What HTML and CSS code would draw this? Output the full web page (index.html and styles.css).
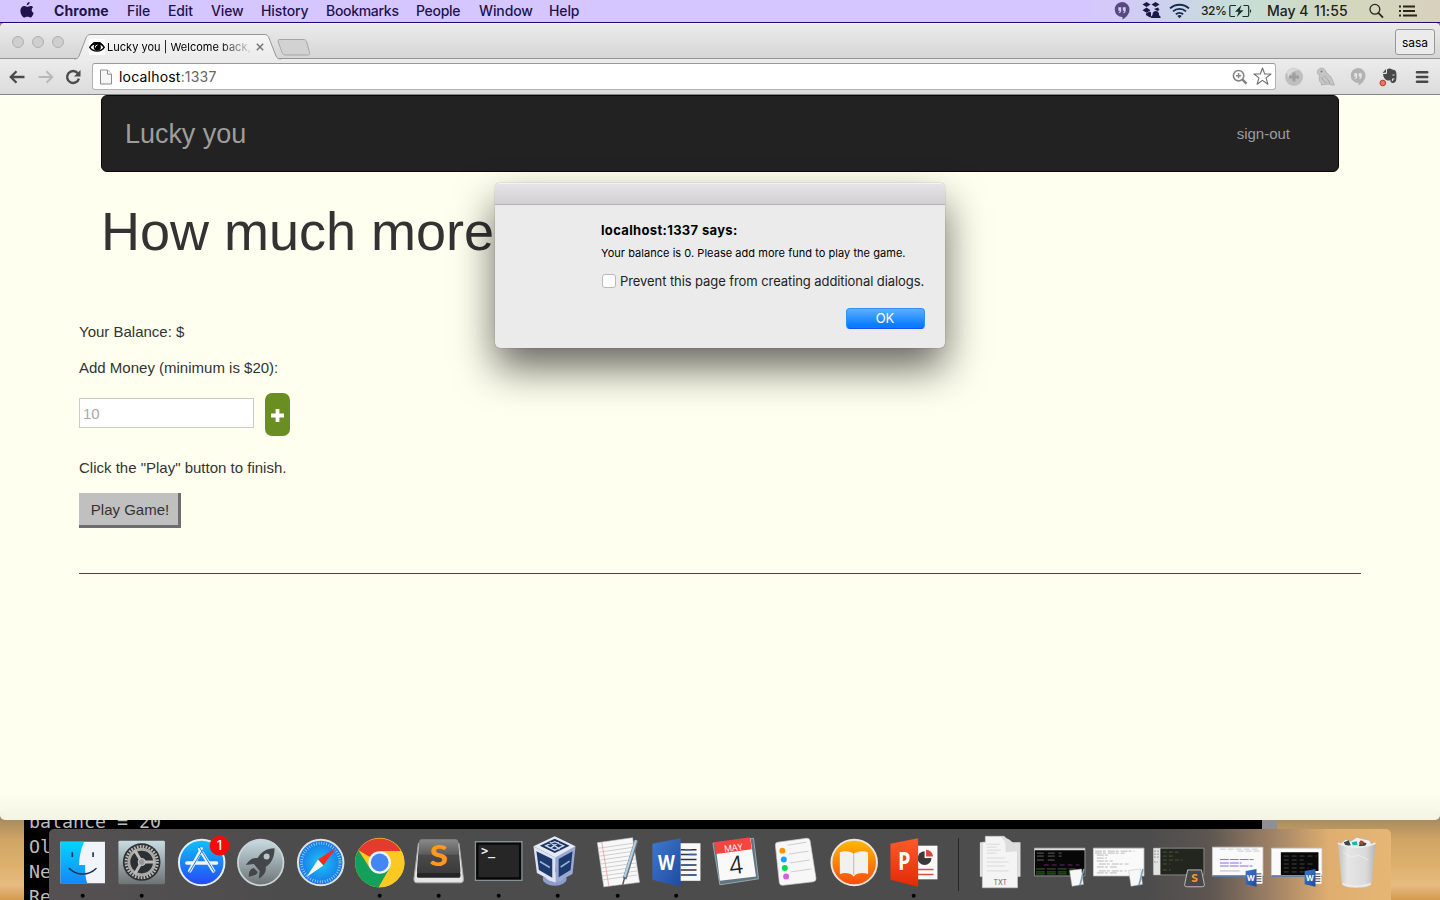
FILE: index.html
```html
<!DOCTYPE html>
<html lang="en">
<head>
<meta charset="utf-8">
<title>Lucky you | Welcome back</title>
<link rel="stylesheet" href="styles.css">
</head>
<body>
<svg class="defs" width="0" height="0" aria-hidden="true">
  <defs>
    <linearGradient id="gBlue" x1="0" y1="0" x2="0" y2="1"><stop offset="0" stop-color="#0fc1fb"/><stop offset="1" stop-color="#2747f5"/></linearGradient>
    <radialGradient id="gSafari"><stop offset="0" stop-color="#19c8f5"/><stop offset="1" stop-color="#1a72e8"/></radialGradient>
    <linearGradient id="gFinder" x1="0" y1="0" x2="0" y2="1"><stop offset="0" stop-color="#00d5ff"/><stop offset="1" stop-color="#1787f8"/></linearGradient>
    <linearGradient id="gSteel" x1="0" y1="0" x2="0" y2="1"><stop offset="0" stop-color="#c7dce3"/><stop offset="1" stop-color="#6e7375"/></linearGradient>
    <linearGradient id="gWord" x1="0" y1="0" x2="1" y2="1"><stop offset="0" stop-color="#3f78d0"/><stop offset="1" stop-color="#1e4c9f"/></linearGradient>
    <linearGradient id="gPower" x1="0" y1="0" x2="0" y2="1"><stop offset="0" stop-color="#ff5a28"/><stop offset="1" stop-color="#e02a08"/></linearGradient>
    <linearGradient id="gBooks" x1="0" y1="0" x2="0" y2="1"><stop offset="0" stop-color="#ffb900"/><stop offset="1" stop-color="#fb4a0c"/></linearGradient>
    <linearGradient id="gKey" x1="0" y1="0" x2="0" y2="1"><stop offset="0" stop-color="#8a8a8a"/><stop offset=".45" stop-color="#5c5c5c"/><stop offset=".46" stop-color="#4a4a4a"/><stop offset="1" stop-color="#3b3b3b"/></linearGradient>
    <linearGradient id="gBin" x1="0" y1="0" x2="1" y2="0"><stop offset="0" stop-color="#bfbfbf"/><stop offset=".25" stop-color="#e6e6e6"/><stop offset=".75" stop-color="#dadada"/><stop offset="1" stop-color="#b5b5b5"/></linearGradient>
    <linearGradient id="gTab" x1="0" y1="0" x2="0" y2="1"><stop offset="0" stop-color="#f6f6f6"/><stop offset="1" stop-color="#ebebeb"/></linearGradient>
    <symbol id="bubble" viewBox="0 0 16 18"><path fill="currentColor" fill-rule="evenodd" d="M8 0a7.5 7.5 0 0 1 7.5 7.5C15.500 12 12 15.500 8.500 17.500V15A7.500 7.500 0 1 1 8 0ZM4.300 5.200v3.600h1.500c0 .9-.4 1.400-1.100 1.600v.9c1.500-.2 2.500-1.200 2.500-2.800V5.200Zm4.500 0v3.600h1.500c0 .9-.4 1.400-1.100 1.600v.9c1.500-.2 2.500-1.200 2.500-2.800V5.200Z"/></symbol>
    <symbol id="miniWord" viewBox="0 0 20 20"><path fill="#fff" d="M9 3h9v13H9z"/><path stroke="#444" d="M11 6h6M11 8.500h6M11 11h6M11 13.500h6"/><path fill="url(#gWord)" d="M1 3l11-2v18L1 16.500z"/><text x="2.400" y="13" class="glyph-mini">W</text></symbol>
    <symbol id="miniEdit" viewBox="0 0 20 20"><path fill="#f7f7f7" stroke="#bbb" stroke-width=".5" d="M3 2.500l12-1.500 2 15.500-11.500 2z"/><path stroke="#7da0b6" stroke-width="1.600" d="M17.500 1l-4 16.500"/></symbol>
  </defs>
</svg>

<header class="menubar">
  <nav class="menus">
    <svg class="apple" width="14" height="16" viewBox="0 0 14 16"><path fill="#20124c" d="M9.700 0c.1 1.700-1.400 3.300-3 3.300C6.500 1.700 8.100.2 9.700 0ZM13.200 5.300c-2.200 1.400-1.900 4.600.5 5.600-.6 1.800-2 4.600-3.400 4.600-1.100 0-1.500-.7-2.900-.7s-1.800.7-2.800.7C2.600 15.500.4 12 .4 8.700.4 5.600 2.300 4 4.200 4c1.300 0 2.300.8 3.100.8.700 0 1.900-.9 3.400-.9 1 0 1.900.5 2.500 1.400Z"/></svg>
    <span class="app-name">Chrome</span><span>File</span><span>Edit</span><span>View</span><span>History</span><span class="tight">Bookmarks</span><span class="tight">People</span><span>Window</span><span>Help</span>
  </nav>
  <div class="status">
    <svg class="st-bubble" width="16" height="18"><use href="#bubble"/></svg>
    <svg width="19" height="17" viewBox="0 0 19 17" fill="#1b1746"><path d="M4.500 0l4 2.500-4 2.600-4-2.600zM13.500 0l4 2.500-4 2.600-4-2.600zM4.500 5.600l4 2.600-4 2.600-4-2.600zM4 11.600l3.500-2 1.500 1v4.200l-1 .7-4-2.400z"/><path d="M9 16v-1.500c1.200-.5 1.700-1.500 1.700-3.200a3.200 3.200 0 0 1 6.200 0c0 1.700.4 2.700 1.600 3.200V16z"/><path d="M12 7l4-1.500L17.500 8l-2 1z"/></svg>
    <svg width="21" height="16" viewBox="0 0 21 16" fill="none" stroke="#182b4e" stroke-width="1.900"><path d="M1 5.400a14 14 0 0 1 19 0M4 8.400a9.600 9.600 0 0 1 13 0M6.900 11.300a5.400 5.400 0 0 1 7.200 0"/><path fill="#182b4e" stroke="none" d="M8.300 12.900a3.300 3.300 0 0 1 4.400 0L10.500 15.200z"/></svg>
    <span class="pct">32%</span>
    <svg width="23" height="14" viewBox="0 0 23 14"><path fill="none" stroke="#1d2c2c" stroke-width="1.200" d="M7 1.500H2a1.200 1.200 0 0 0-1.200 1.200v8.600A1.200 1.200 0 0 0 2 12.500h4M14.500 1.500h4a1.200 1.200 0 0 1 1.200 1.200v8.600a1.200 1.200 0 0 1-1.200 1.200h-5"/><path fill="#1d2c2c" d="M12.500 1L6 7.800h3.600L7.800 13l6.700-6.800h-3.700zM21 5.200c1.600.5 1.600 3.100 0 3.600z"/></svg>
    <span class="date">May 4</span><span class="time">11:55</span>
    <svg class="st-search" width="15" height="16" viewBox="0 0 15 16" fill="none" stroke="#24271a"><circle cx="5.900" cy="6.300" r="4.900" stroke-width="1.300"/><path stroke-width="1.700" d="M9.400 9.900l4.600 4.700"/></svg>
    <svg class="st-list" width="18" height="12" viewBox="0 0 18 12" stroke="#24271a" stroke-width="1.800"><path d="M0 1.500h2M4 1.500h12M0 6h2M4 6h12M0 10.500h2M4 10.500h14"/></svg>
  </div>
</header>

<section class="terminal">
  <pre class="output">balance = 20
Ol
Ne
Re</pre>
  <div class="scroll"></div>
</section>

<main class="browser">
  <div class="tabstrip">
    <div class="lights"><i></i><i></i><i></i></div>
    <div class="tab">
      <svg class="tab-shape" width="210" height="26" viewBox="0 0 210 26"><path fill="url(#gTab)" stroke="#969696" d="M0 25C3 25 4 24 5 22L12 4C13 1.500 14 .5 17 .5H190C193 .5 194 1.500 195 4L202 22C203 24 204 25 207 25"/><path stroke="#ededed" stroke-width="1.500" d="M3 25.700h201"/></svg>
      <svg class="favicon" width="16" height="16" viewBox="0 0 16 16"><path fill="#fff" d="M0 0h16v16H0z"/><path fill="none" stroke="#000" stroke-width="1.500" d="M.8 8.300C4 3.200 12 3.200 15.200 8.300 12 13.300 4 13.300.8 8.300Z"/><path stroke="#000" d="M2 6l3-2.500h6L14 6"/><circle cx="8.300" cy="8" r="3.600"/><path fill="none" stroke="#fff" stroke-width=".9" d="M6.500 8.500V7l2-1"/></svg>
      <span class="tab-title">Lucky you | Welcome back,</span>
      <svg class="tab-close" width="8" height="8" viewBox="0 0 8 8"><path stroke="#777" stroke-width="1.500" d="M.8.8l6.400 6.400M7.200.8L.8 7.200"/></svg>
    </div>
    <svg class="newtab" width="34" height="17" viewBox="0 0 34 17"><path fill="#d2d2d2" stroke="#a5a5a5" d="M3 .5h23c2 0 3 .6 3.700 2.300l2.800 10.700c.5 1.700-.4 2.500-2 2.500H9c-2 0-3.200-.6-3.800-2.300L1.300 3C.7 1.300 1.300.5 3 .5Z"/></svg>
    <span class="profile">sasa</span>
  </div>
  <div class="toolbar">
    <svg class="t-back" width="16" height="14" viewBox="0 0 16 14" fill="none" stroke="#4b4b4b" stroke-width="2.300"><path d="M15.500 7H2M7.500 1.200L1.800 7l5.700 5.800"/></svg>
    <svg class="t-fwd" width="16" height="14" viewBox="0 0 16 14" fill="none" stroke="#b9b9b9" stroke-width="2"><path d="M.5 7H14M8.500 1.200L14.200 7l-5.700 5.800"/></svg>
    <svg class="t-reload" width="16" height="16" viewBox="0 0 16 16"><path fill="none" stroke="#4b4b4b" stroke-width="2.400" d="M12.800 4.200A6 6 0 1 0 13.900 9.600"/><path fill="#4b4b4b" d="M15.500 1v6.500H9z"/></svg>
    <div class="omnibox">
      <svg width="12" height="16" viewBox="0 0 12 16"><path fill="#f6f6f6" stroke="#8b8b8b" d="M.5 1h7l4 4.200V15H.5z"/><path fill="#fff" stroke="#8b8b8b" d="M7.500 1v4.200h4"/></svg>
      <span class="url">localhost<em>:1337</em></span>
      <svg class="o-zoom" width="16" height="16" viewBox="0 0 16 16" fill="none" stroke="#858585"><circle cx="6.600" cy="6.700" r="5.200" stroke-width="1.600"/><path stroke-width="1.400" d="M4 6.700h5.200M6.600 4.100v5.200"/><path stroke-width="2.400" d="M10.500 10.600l4 4"/></svg>
      <svg width="19" height="19" viewBox="0 0 19 19"><path fill="#fff" stroke="#6e6e6e" stroke-width="1.100" stroke-linejoin="round" d="M9.500 1l2.200 6h6.300l-5 3.900 1.900 6.300-5.400-3.800-5.400 3.800L6 10.900 1 7h6.300z"/></svg>
    </div>
    <div class="extensions">
      <svg width="20" height="20" viewBox="0 0 20 20"><circle cx="10" cy="10" r="9" fill="#bfbfbf"/><path fill="#dadada" d="M3 5a9 9 0 0 1 12-2c-5 0-9 3-11 8z"/><path fill="#9f9f9f" d="M8.500 5.500h3v3H15v3h-3.500v3h-3v-3H5v-3h3.500z"/></svg>
      <svg width="20" height="20" viewBox="0 0 20 20"><path fill="#c6c6c6" stroke="#a9a9a9" stroke-width=".8" d="M2 3c2-3 7-2.500 8 2l5 5 3.500 8H15l-2-1-8 1 1-1.500C3 15 2.500 11 4 8L2 7C1 6 1 4 2 3Z"/><path fill="none" stroke="#a5a5a5" d="M8 9c3 2 5 5 6 8M6 10c0 3 2 5 5 6"/><circle cx="5.500" cy="4.500" r=".9" fill="#777"/></svg>
      <svg class="x-bubble" width="16" height="18"><use href="#bubble"/></svg>
      <svg width="20" height="20" viewBox="0 0 20 20"><path fill="#484848" d="M8 2.500c2-1.500 4-1 5 0 4 .3 4.500 2 4.500 6.500 0 5-1 7-3.500 7-2 0-2.700-1-2.500-2.800l-2 .3c-3 0-5-2.500-5.500-6.500H7c1 0 1-1 1-2Z"/><path fill="#484848" d="M3.500 6L7 2v3.500z"/><path fill="none" stroke="#ddd" stroke-width="1.100" d="M13.500 8h2M15.500 12h-2v2"/><circle cx="3.800" cy="16" r="2.800" fill="#ef7562" stroke="#b03b2f"/></svg>
      <svg width="14" height="14" viewBox="0 0 14 14" stroke="#484848" stroke-width="2.600" stroke-linecap="round"><path d="M2 2.200h10.200M2 7h10.200M2 11.800h10.200"/></svg>
    </div>
  </div>
  <div class="page">
    <nav class="navbar"><a class="brand">Lucky you</a><a class="signout">sign-out</a></nav>
    <h1>How much more</h1>
    <section class="funds">
      <p>Your Balance: $</p>
      <p class="add-label">Add Money (minimum is $20):</p>
      <div class="add-row">
        <input class="amount" type="text" placeholder="10">
        <button class="plus" aria-label="Add"><svg width="13" height="13" viewBox="0 0 13 13"><path fill="#fff" d="M4.600 0h3.800v4.600H13v3.800H8.400V13H4.600V8.400H0V4.600h4.600z"/></svg></button>
      </div>
      <p class="hint">Click the "Play" button to finish.</p>
      <button class="play">Play Game!</button>
      <hr>
    </section>
  </div>
</main>

<div class="dialog" role="dialog">
  <div class="dialog-bar"></div>
  <div class="dialog-body">
    <strong>localhost:1337 says:</strong>
    <p>Your balance is 0. Please add more fund to play the game.</p>
    <label><i class="check"></i><span>Prevent this page from creating additional dialogs.</span></label>
    <button class="ok">OK</button>
  </div>
</div>

<footer class="dock">
  <svg class="icon running" viewBox="0 0 60 71"><path fill="#f1f4fa" d="M7.500 12.500h45v42h-45z"/><path fill="url(#gFinder)" d="M7.500 12.500h24C28 20 26.500 28 26.300 36h6.200c-.2 7 .3 13 2 18.500h-27z"/><path fill="none" stroke="#17304e" stroke-width="1.400" stroke-linecap="round" d="M16.500 39.500C24 47 36 47 43.500 39.500"/><path stroke="#17304e" stroke-width="1.600" d="M19.500 23v5M40.500 23v5"/><circle cx="30" cy="67" r="2"/></svg>
  <svg class="icon running" viewBox="0 0 60 71"><rect x="6.500" y="11.500" width="47" height="44" rx="1.500" fill="url(#gSteel)"/><circle cx="30" cy="33" r="19" fill="#2d3033"/><circle cx="30" cy="33" r="15.800" fill="none" stroke="#b9b9b7" stroke-width="3" stroke-dasharray="1.700 1.300"/><circle cx="30" cy="33" r="13" fill="none" stroke="#aaa9a6" stroke-width="3"/><path stroke="#bbb" stroke-width="3" d="M30 33h13M30 33l-7-12M30 33l-7 12"/><circle cx="30" cy="33" r="3.600" fill="#999" stroke="#ccc"/><circle cx="30" cy="67" r="2"/></svg>
  <svg class="icon" viewBox="0 0 60 71"><circle cx="30" cy="33.500" r="23" fill="url(#gBlue)" stroke="#e7f0f5" stroke-width="2"/><g stroke="#eef5fb" stroke-width="3.600" stroke-linecap="round"><path d="M30 20L18 42M28 20l14 22M15 34h30"/></g><path stroke="#2379ef" d="M27 17l17 28M32 19L17 44"/><circle cx="48" cy="16.500" r="10" fill="#f80a0a"/><text x="48" y="21" text-anchor="middle" class="badge">1</text></svg>
  <svg class="icon" viewBox="0 0 60 71"><circle cx="30" cy="33.500" r="23" fill="url(#gSteel)" stroke="#cbd4d7" stroke-width="1.800"/><path fill="#43474b" d="M44 19c-8 0-14 4-17 10-5-1-9 2-12 7l8-1 6 7-1 8c5-3 8-7 7-12 6-4 9-10 9-19ZM23 39c-4 1-5 4-5 9 5-1 8-2 9-5z"/><circle cx="36" cy="27.500" r="3" fill="#bdc4c7"/></svg>
  <svg class="icon" viewBox="0 0 60 71"><circle cx="30" cy="33.500" r="23" fill="url(#gSafari)" stroke="#e0e3e5" stroke-width="2"/><circle cx="30" cy="33.500" r="19.500" fill="none" stroke="#a8ddfb" stroke-width="3" stroke-dasharray=".7 1.850"/><path fill="#ff281f" d="M45.500 18.500L27.300 30.500l5.400 6z"/><path fill="#f5f5f5" d="M15.500 48.500l11.800-18 5.400 6z"/></svg>
  <svg class="icon running" viewBox="0 0 60 71"><circle cx="30" cy="33.500" r="25" fill="#fbc921"/><path fill="#e33b2e" d="M30 33.500L8.500 21A25 25 0 0 1 51.500 22H30z"/><path fill="#13a05a" d="M8.500 21A25 25 0 0 0 29 58.500l11-19L30 33.500 20 39z"/><path fill="#fbc921" d="M30 22h22.300A25 25 0 0 1 29 58.500l11-19z"/><circle cx="30" cy="33.500" r="11.400" fill="#f4f4f4"/><circle cx="30" cy="33.500" r="9" fill="#4486f4"/><circle cx="30" cy="67" r="2"/></svg>
  <svg class="icon running" viewBox="0 0 60 71"><path fill="#e5e5e5" stroke="#aaa" d="M9.500 14h41l4.500 36q.5 4-3 4H8q-3.500 0-3-4z"/><path fill="#242424" d="M9 38h42l1 8q.3 3-2.500 3H10.500q-3 0-2.500-3z"/><path fill="url(#gKey)" d="M13 10h34q2.500 0 2.800 2.500L52 42q.2 2-2 2H10q-2 0-2-2l2.200-29.500Q10.500 10 13 10z"/><text transform="translate(30 37) scale(1.200 1)" text-anchor="middle" class="glyph-s">S</text><circle cx="30" cy="67" r="2"/></svg>
  <svg class="icon running" viewBox="0 0 60 71"><path fill="#202020" stroke="#849298" stroke-width="1.300" d="M6.500 12.500h47v39h-47z"/><path fill="#262626" stroke="#080808" stroke-width="2" d="M8.500 14.500h43v35h-43z"/><text x="12" y="26" class="glyph-term">&gt;_</text><circle cx="30" cy="67" r="2"/></svg>
  <svg class="icon running" viewBox="0 0 60 71"><ellipse cx="27" cy="50" rx="12" ry="7" fill="#8e9cca"/><ellipse cx="27" cy="48" rx="9" ry="5" fill="#dbe4f6"/><path fill="#9aa8d4" d="M27 28l21-11-3 28-17 9z"/><path fill="#e6eaf6" d="M27 7l21 10-20.500 11.500L5.500 17z"/><path fill="#dfe3f2" d="M5.500 17l22 11.500V54L9 44z"/><path fill="#1d325d" d="M27 9.500l15 7-15 7.500-15-7.500z"/><path fill="#1c3a6e" d="M8.500 22L24.500 30v19L11 41zM31 30l14-8-2 19-12 7.500z"/><path fill="none" stroke="#c5d4ed" stroke-width="1.400" d="M18 16.500l9-4 9 4-9 4.500zM22 13l10 7M23 19l8-6"/><path stroke="#9fb3d6" stroke-width="1.600" d="M12 32.500l10 6M33 38l9-6"/><circle cx="30" cy="67" r="2"/></svg>
  <svg class="icon running" viewBox="0 0 60 71"><path fill="#f8f8f8" stroke="#d1d1d1" stroke-width=".6" d="M9.500 13.500L45 8.500l7 45L16 58z"/><path stroke="#bbb" stroke-width=".7" d="M11 19l35-5M11.500 23l35-5M12 27l35-5M12.500 31l35-5M13 35l35-5M13.500 39l35-5M14 43l35-5M14.500 47l35-5M15 51l35-5"/><path stroke="#ee9a99" stroke-width=".8" d="M14 13l7 44"/><path stroke="#6c7275" stroke-width="4" d="M49 11L37 50"/><path stroke="#add0e7" stroke-width="2.300" d="M48.500 11L37 48"/><path stroke="#555" stroke-width="1.500" d="M37 49l-2 7"/><circle cx="30" cy="67" r="2"/></svg>
  <svg class="icon running" viewBox="0 0 60 71"><path fill="#f8f8f8" d="M32 14h22v38H32z"/><path stroke="#333" stroke-width="1.500" d="M34 20.500h16M34 25.500h16M34 30.500h16M34 36h16M34 41h16M34 46h16"/><path stroke="#3465ae" stroke-width="1.500" d="M38 20.500h7M42 25.500h8M38 36h6M42 46h8"/><path fill="url(#gWord)" d="M5.500 14.500L34 9v49L5.500 51z"/><text transform="translate(19.500 41) scale(.8 1)" text-anchor="middle" class="glyph-w">W</text><circle cx="29.500" cy="67" r="2"/></svg>
  <svg class="icon" viewBox="0 0 60 71"><path fill="#607580" stroke="#93a8b2" d="M7 14l41-5 5 41-39 6z"/><path fill="#f9f9f9" d="M9.500 14.500L45 9.500l5.500 38L14 52z"/><path fill="#f7443f" d="M8.500 13L44.500 8l1.700 12-36 5z"/><text x="28" y="21.500" text-anchor="middle" class="glyph-may" transform="rotate(-7 29 22)">MAY</text><text x="30" y="45" text-anchor="middle" class="glyph-day" transform="rotate(-7 29 35)">4</text></svg>
  <svg class="icon" viewBox="0 0 60 71"><path fill="#f7f7f7" stroke="#ccc" stroke-width=".7" d="M12 13l29-4q3-.3 3.500 2.500l6 38q.3 3-3 3.500L17 56.500q-3 .3-3.500-2.500l-4-38q-.3-2.500 2.500-3z"/><path stroke="#c2c2c2" stroke-width=".8" d="M22 16l19-3M23 25l20-3M24 34l20-3M25 43l21-3"/><circle cx="16.500" cy="21.500" r="3" fill="#ff9400"/><circle cx="18" cy="30.500" r="3" fill="#17a4fa"/><circle cx="19" cy="39" r="3" fill="#08dc4b"/><circle cx="20.300" cy="47.500" r="3" fill="#d85de4"/></svg>
  <svg class="icon" viewBox="0 0 60 71"><circle cx="29.500" cy="33.500" r="23" fill="url(#gBooks)" stroke="#e9e5df" stroke-width="2"/><path fill="#f1f1ee" d="M29 25c-3-3-9-3.500-14-2v22c5-1.500 11-1 14 2.500 3-3.500 9-4 14.500-2.500V23C38 21.500 32 22 29 25Z"/><path stroke="#aaa" stroke-width=".8" d="M29 25v21"/></svg>
  <svg class="icon running" viewBox="0 0 60 71"><path fill="#fafafa" d="M34 16.500h20v34H34z"/><circle cx="41" cy="29" r="7" fill="#393939"/><path fill="#fafafa" d="M41 29v-8h8v8z"/><path fill="#db4638" d="M42.500 27.500v-7a7 7 0 0 1 7 7z"/><path stroke="#dc5144" stroke-width="1.500" d="M34 40.500h16M34 45.500h16"/><path fill="url(#gPower)" d="M6.500 14.500L34.500 9v49l-28-7z"/><text transform="translate(20.500 41.500) scale(.8 1)" text-anchor="middle" class="glyph-p">P</text><circle cx="30" cy="67" r="2"/></svg>
  <i class="divider"></i>
  <svg class="icon" viewBox="0 0 60 71"><path fill="#dedede" d="M10 13h41v35H10z"/><path fill="#f4f4f4" stroke="#ccc" stroke-width=".6" d="M15.500 7h19L48 22v37H12.500V13h3z"/><path fill="#ddd" d="M30 7q7 3 6 16l12-1q-4-13-18-15z"/><path fill="none" stroke="#d3d3d3" stroke-width=".8" d="M17 15h13M17 18h10M17 21h14M17 24h10M17 29h18M17 33h22M17 37h18M17 42h22"/><text x="30.500" y="56" text-anchor="middle" class="glyph-txt">TXT</text></svg>
  <svg class="icon" viewBox="0 0 60 71"><path fill="#070707" stroke="#aaa" stroke-width=".8" d="M4.500 19h51v28h-51z"/><path stroke="#ddd" stroke-width="2" d="M4.500 20h51"/><path stroke="#777" stroke-width=".8" stroke-dasharray="7 4" d="M7 24h25M7 27h25M7 31h18"/><path stroke="#8e268f" stroke-width=".8" stroke-dasharray="5 3" d="M14 36h36"/><path stroke="#356e22" stroke-dasharray="9 2" d="M6 40h40M6 43h34M6 45h35"/><use href="#miniEdit" x="37" y="39" width="20" height="20"/></svg>
  <svg class="icon" viewBox="0 0 60 71"><path fill="#fafafa" stroke="#ccc" stroke-width=".8" d="M4.500 19h51v28h-51z"/><path stroke="#aaa" stroke-width=".8" stroke-dasharray="7 1 3 2" d="M6 22h40M6 24h30M8 26h12M8 29h10M8 32h16M10 35h30M8 38h20M10 42h28M8 44h20"/><use href="#miniEdit" x="37" y="39" width="20" height="20"/></svg>
  <svg class="icon" viewBox="0 0 60 71"><path fill="#23251f" stroke="#999" stroke-width=".8" d="M4.500 19h51v27h-51z"/><path fill="#e2e2e2" d="M4.500 19h7v27h-7z"/><path stroke="#999" stroke-dasharray="2 1" d="M5 22h5M5 25h5M5 28h5M5 33h4"/><path stroke="#59603f" stroke-width=".8" stroke-dasharray="4 2" d="M14 23h16M14 27h12M14 31h20M14 35h7M14 41h8"/><path fill="#484848" stroke="#bbb" d="M39 41h14l3 15q0 2-2 2H38q-2 0-2-2z"/><text x="46" y="53.500" text-anchor="middle" class="glyph-s2">S</text></svg>
  <svg class="icon" viewBox="0 0 60 71"><path fill="#fafafa" stroke="#ccc" stroke-width=".8" d="M4.500 18h51v29h-51z"/><path stroke="#c7ccd6" stroke-dasharray="6 2" d="M12 20h40M30 22h22"/><path stroke="#8668ea" stroke-dasharray="9 1" d="M12 30.500h34M12 34h22M12 37h33"/><path stroke="#bbb" d="M12 42h20"/><path stroke="#4974b5" stroke-width="1.500" d="M4.500 47h51"/><use href="#miniWord" x="37" y="39" width="20" height="20"/></svg>
  <svg class="icon" viewBox="0 0 60 71"><path fill="#fafafa" stroke="#ccc" stroke-width=".8" d="M4.500 19h51v28h-51z"/><path fill="#090909" d="M14 23h38v23H14z"/><path stroke="#444" stroke-dasharray="5 3" d="M17 27h33M17 31h20M17 35h31M17 39h25M17 43h20"/><path stroke="#4974b5" stroke-width="1.500" d="M4.500 47h51"/><use href="#miniWord" x="37" y="39" width="20" height="20"/></svg>
  <svg class="icon" viewBox="0 0 60 71"><path fill="#f0f0f0" stroke="#aaa" stroke-width=".6" d="M13 15l6-5 5 2 6-4 8 2 5 1 3 6-8 6H18z"/><path fill="#3c4748" d="M17 13l5-2 2 5-5 1zM34 12l6 2-2 4-6-1z"/><path fill="#1db4b4" d="M25 13l5-1 1 4h-5z"/><path fill="#b3442e" d="M34 11l3 1-1 4-4-2z"/><path fill="url(#gBin)" d="M11 14q19 7 38 0l-4 41q-1 4-15 4t-15-4z"/><path fill="none" stroke="#ededed" stroke-width="1.500" d="M11 14q19 8 38 0M15.500 55q14 5 29 0"/><path fill="none" stroke="#f5f5f5" opacity=".6" d="M16 23l8 5 8-2 10 5"/></svg>
</footer>
</body>
</html>
```

FILE: styles.css
```css
* { box-sizing: border-box; }
body {
  margin: 0;
  width: 1440px;
  height: 900px;
  overflow: hidden;
  position: relative;
  font-family: Inter, "Liberation Sans", sans-serif;
  background: linear-gradient(#a58a5e 0, #a58a5e 818px, #d0a565 840px, #dcb06c 865px, #e8bb80 885px, #d39a50 900px);
}
svg { display: block; }
p, h1, pre { margin: 0; }
.defs { position: absolute; }

.menubar {
  height: 23px;
  display: flex;
  justify-content: space-between;
  border-bottom: 1px solid #20057e;
  background: linear-gradient(90deg, #d6c6ff 0, #d6c6ff 1080px, #cdd0ee 1160px, #c7dfd8 1240px, #d2d8bd 1340px, #d8d1bd 1440px);
  font-size: 14px;
  font-weight: 450;
  line-height: 22px;
  letter-spacing: -.12px;
  color: #22134e;
  white-space: nowrap;
}
.menus { display: grid; grid-template-columns: 54px 73px 41px 43px 50px 65px 90px 63px 70px 40px; }
.apple { margin: 2px 0 0 20px; }
.app-name { font-weight: 700; letter-spacing: .1px; }
.tight { letter-spacing: -.3px; }
.status {
  display: grid;
  grid-template-columns: 28px 27px 32px 28px 38px 47px 55px 30px 41px;
  align-items: center;
  color: #1d2119;
}
.status svg { margin-top: -1px; }
.st-bubble { color: #57487f; }
.pct { font-size: 12px; letter-spacing: -.5px; }
.date { letter-spacing: 0; }
.time { letter-spacing: .1px; }

.terminal {
  position: absolute;
  left: 24px;
  top: 805px;
  width: 1253px;
  height: 95px;
  display: flex;
  justify-content: space-between;
  background: #000;
  overflow: hidden;
}
.output {
  padding: 4px 0 0 5px;
  font: 18.300px/25px "DejaVu Sans Mono", monospace;
  color: #bcbcbc;
}
.scroll { width: 15px; background: #8f8f94; }

.browser {
  position: absolute;
  left: 0;
  top: 23px;
  width: 1440px;
  height: 797px;
  border-radius: 5px;
  overflow: hidden;
  background: linear-gradient(#ffffef 96.500%, #f4f4e4);
}
.tabstrip {
  height: 36px;
  display: flex;
  border-bottom: 1px solid #969696;
  border-top: 1px solid #f6f6f6;
  background: linear-gradient(#ebebeb, #d6d6d6);
}
.lights { display: flex; gap: 8px; padding: 12px 0 0 12px; width: 74px; }
.lights i { width: 12px; height: 12px; border: 1px solid #b0b0b0; border-radius: 50%; background: #cfcfcf; }
.tab { position: relative; width: 204px; height: 26px; margin-top: 10px; display: flex; }
.tab-shape { position: absolute; left: 0; top: 0; }
.favicon { position: relative; margin: 5px 2px 0 15px; }
.tab-title {
  position: relative;
  width: 144px;
  margin-top: 5px;
  white-space: nowrap;
  font-size: 11px;
  line-height: 16px;
  letter-spacing: .02px;
  background: linear-gradient(90deg, #000 112px, rgba(0,0,0,.15) 142px);
  background-clip: text;
  color: transparent;
}
.tab-close { position: relative; margin: 9px 0 0 5px; }
.newtab { margin: 15px 0 0 -1px; }
.profile {
  width: 40px;
  height: 26px;
  margin: 5px 5px 0 auto;
  border: 1px solid #979797;
  border-radius: 3px;
  background: #ebebeb;
  font-size: 12px;
  line-height: 25px;
  text-align: center;
}
.toolbar {
  height: 36px;
  display: flex;
  align-items: center;
  border-bottom: 1px solid #858585;
  background: linear-gradient(#ececec, #dcdcdc);
}
.t-back { margin-left: 9px; }
.t-fwd { margin-left: 13px; }
.t-reload { margin-left: 11px; }
.omnibox {
  width: 1184px;
  height: 27px;
  margin-left: 11px;
  padding: 0 3px 0 7px;
  display: flex;
  align-items: center;
  border: 1px solid #b2b2b2;
  border-top-color: #999;
  border-radius: 3px;
  background: #fff;
}
.url { margin-left: 7px; font-size: 14px; line-height: 20px; letter-spacing: .2px; }
.url em { font-style: normal; color: #666; }
.o-zoom { margin: 0 5px 0 auto; }
.extensions { width: 164px; padding: 0 11px 0 8px; display: grid; grid-template-columns: 32px 34px 29px 36px 14px; align-items: center; }
.x-bubble { color: #b2b2b2; }

.page { font-family: "Liberation Sans", Arial, sans-serif; font-size: 15px; line-height: 20px; color: #333; }
.navbar {
  height: 77px;
  margin: 0 101px;
  padding: 0 48px 0 23px;
  display: flex;
  align-items: center;
  justify-content: space-between;
  border: 1px solid #080808;
  border-radius: 6px;
  background: #222;
  color: #9d9d9d;
}
.brand { font-size: 27px; line-height: 31px; letter-spacing: -.05px; padding-top: 1px; }
h1 { margin: 29px 101px 0; font-size: 54px; font-weight: 400; line-height: 60px; }
.funds { padding: 61px 79px 0; }
.add-label { margin-top: 16px; }
.add-row { display: flex; gap: 11px; align-items: flex-start; margin-top: 15px; }
.amount {
  width: 175px;
  height: 30px;
  margin-top: 5px;
  padding: 0 3px;
  border: 1px solid #ccc;
  background: #fff;
  font: 15px "Liberation Sans", Arial, sans-serif;
}
.amount::placeholder { color: #a9a9a9; }
.plus { width: 25px; height: 43px; padding: 1px 0 0; border: 0; border-radius: 7px; background: #6b8e23; display: grid; place-items: center; }
.hint { margin-top: 22px; }
.play {
  display: block;
  width: 102px;
  height: 35px;
  margin-top: 15px;
  padding: 1px 0 0 3px;
  border-style: solid;
  border-width: 0 3px 3px 0;
  border-color: #6e6e6e;
  background: #c0c0c0;
  color: #333;
  font: 15px "Liberation Sans", Arial, sans-serif;
}
hr { margin: 45px 0 0; border: 0; border-top: 1px solid #2f4f3f; }

.dialog {
  position: absolute;
  left: 495px;
  top: 183px;
  width: 450px;
  height: 165px;
  border-radius: 5px;
  background: #ebebeb;
  box-shadow: 0 0 1px rgba(0,0,0,.6), 0 20px 40px rgba(0,0,0,.6);
}
.dialog-bar { height: 22px; border-top: 1px solid #f4f4f4; border-bottom: 1px solid #b4b2b4; border-radius: 5px 5px 0 0; background: linear-gradient(#e6e4e6, #d1cfd1); }
.dialog-body { padding: 17px 20px 0 106px; display: flex; flex-direction: column; white-space: nowrap; color: #000; }
.dialog-body strong { font-size: 13px; line-height: 16px; letter-spacing: .34px; }
.dialog-body p { margin-top: 8px; font-size: 11px; line-height: 14px; letter-spacing: .04px; }
.dialog-body label { display: flex; align-items: center; gap: 4px; height: 16px; margin-top: 13px; font-size: 13px; letter-spacing: -.08px; color: #222; }
.check { width: 14px; height: 14px; margin-left: 1px; flex: none; border: 1px solid #b9b9b9; border-radius: 3px; background: #fff; }
.ok {
  align-self: flex-end;
  width: 79px;
  height: 21px;
  margin-top: 19px;
  padding: 0 1px 1px 0;
  border: 1px solid #2d93f8;
  border-bottom-color: #1b4df5;
  border-radius: 4px;
  background: linear-gradient(#5cafff, #0a7cff 85%);
  color: #fff;
  font: 13px/18px Inter, sans-serif;
}

.dock {
  position: absolute;
  left: 49px;
  top: 829px;
  width: 1342px;
  height: 71px;
  padding-left: 4px;
  display: flex;
  border-radius: 5px 5px 0 0;
  background: linear-gradient(90deg, #555152 0, #4d4c4d 240px, #4d4c4d 1100px, #5c5551 1160px, #a18366 1225px, #dfae70 1280px, #e6b673 1342px);
}
.icon { width: 59.400px; height: 71px; flex: none; }
.divider { width: 1px; height: 53px; margin: 9px 11px 0 14.600px; background: #262626; }
.badge { font: 500 13px Inter, sans-serif; fill: #fff; }
.glyph-s { font: 900 28px Lato, sans-serif; fill: #ff981f; }
.glyph-s2 { font: 900 12px Lato, sans-serif; fill: #ff981f; }
.glyph-term { font: 700 12px "DejaVu Sans Mono", monospace; fill: #eee; }
.glyph-w { font: 700 22px "Open Sans", sans-serif; fill: #fff; }
.glyph-p { font: 700 25px "Open Sans", sans-serif; fill: #fff; }
.glyph-mini { font: 700 8px "Open Sans", sans-serif; fill: #fff; }
.glyph-may { font: 9px "Open Sans", sans-serif; fill: #fff; }
.glyph-day { font: 300 25px Inter, sans-serif; fill: #222; }
.glyph-txt { font: 7px Inter, sans-serif; fill: #666; }
```
